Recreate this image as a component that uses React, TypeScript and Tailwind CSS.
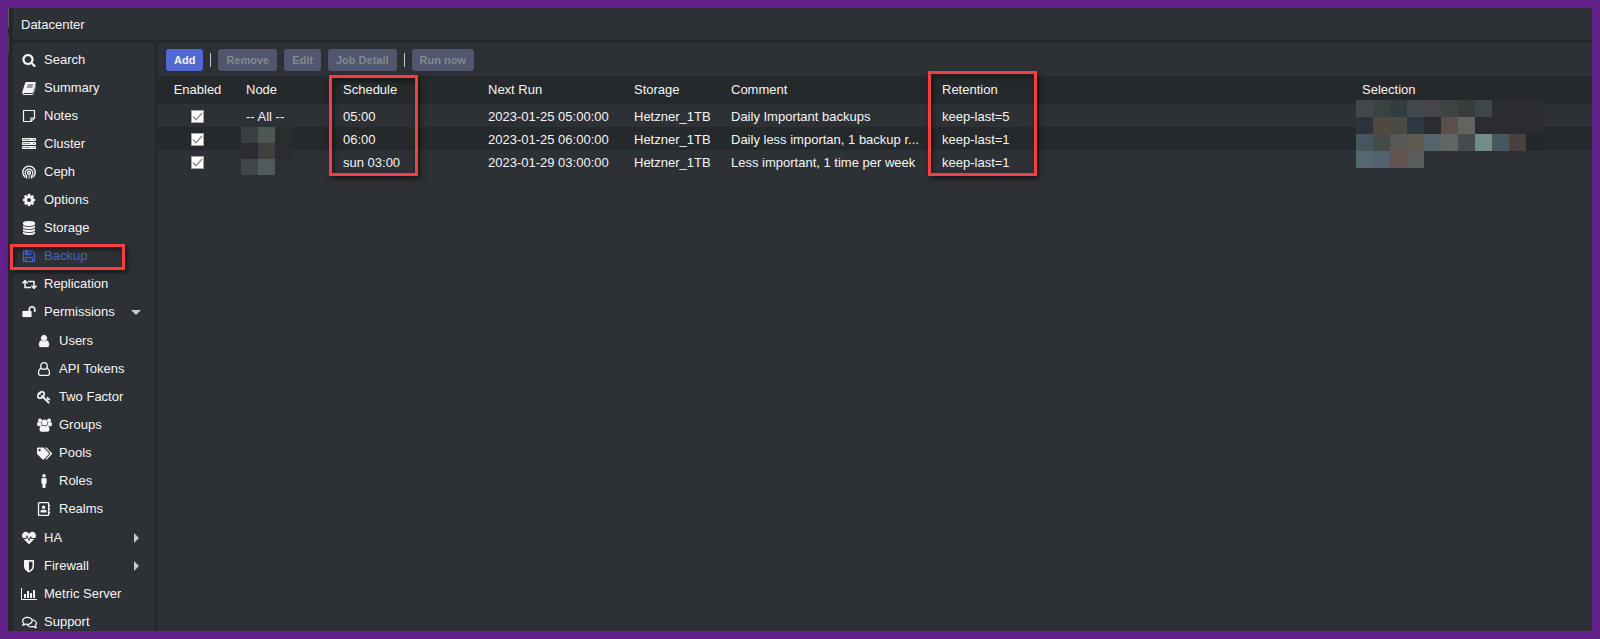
import type { ReactNode } from "react";
import clsx from "clsx";
import {
  FaHeartbeat,
  FaMale,
  FaRegAddressBook,
  FaRegComments,
  FaRetweet,
  FaTags,
} from "react-icons/fa";

type NavItem = {
  label: string;
  icon: ReactNode;
  active?: boolean;
  arrow?: "down" | "right";
  children?: NavItem[];
};

type Job = {
  node: string;
  schedule: string;
  nextRun: string;
  storage: string;
  comment: string;
  retention: string;
};

function Glyph({ d }: { d: string }) {
  return (
    <svg
      viewBox="0 0 1792 1792"
      className="size-[14px]"
      fill="currentColor"
      stroke="currentColor"
      strokeWidth="30"
    >
      <path d={d} />
    </svg>
  );
}

const paths = {
  search:
    "M1216 832q0-185-131.5-316.5t-316.5-131.5-316.5 131.5-131.5 316.5 131.5 316.5 316.5 131.5 316.5-131.5 131.5-316.5zm512 832q0 52-38 90t-90 38q-54 0-90-38l-343-342q-179 124-399 124-143 0-273.5-55.5t-225-150-150-225-55.5-273.5 55.5-273.5 150-225 225-150 273.5-55.5 273.5 55.5 225 150 150 225 55.5 273.5q0 220-124 399l343 343q37 37 37 90z",
  cog: "M1152 896q0-106-75-181t-181-75-181 75-75 181 75 181 181 75 181-75 75-181zm512-109v222q0 12-8 23t-20 13l-185 28q-19 54-39 91 35 50 107 138 10 12 10 25t-9 23q-27 37-99 108t-94 71q-12 0-26-9l-138-108q-44 23-91 38-16 136-29 186-7 28-36 28h-222q-14 0-24.5-8.5t-11.5-21.5l-28-184q-49-16-90-37l-141 107q-10 9-25 9-14 0-25-11-126-114-165-168-7-10-7-23 0-12 8-23 15-21 51-66.5t54-70.5q-27-50-41-99l-183-27q-13-2-21-12.5t-8-23.5v-222q0-12 8-23t19-13l186-28q14-46 39-92-40-57-107-138-10-12-10-24 0-10 9-23 26-36 98.5-107.5t94.5-71.5q13 0 26 10l138 107q44-23 91-38 16-136 29-186 7-28 36-28h222q14 0 24.5 8.5t11.5 21.5l28 184q49 16 90 37l142-107q9-9 24-9 13 0 25 10 129 119 165 170 7 8 7 22 0 12-8 23-15 21-51 66.5t-54 70.5q26 50 41 98l183 28q13 2 21 12.5t8 23.5z",
  database:
    "M896 768q237 0 443-43t325-127v170q0 69-103 128t-280 93.5-385 34.5-385-34.5-280-93.5-103-128v-170q119 84 325 127t443 43zm0 768q237 0 443-43t325-127v170q0 69-103 128t-280 93.5-385 34.5-385-34.5-280-93.5-103-128v-170q119 84 325 127t443 43zm0-384q237 0 443-43t325-127v170q0 69-103 128t-280 93.5-385 34.5-385-34.5-280-93.5-103-128v-170q119 84 325 127t443 43zm0-1152q208 0 385 34.5t280 93.5 103 128v128q0 69-103 128t-280 93.5-385 34.5-385-34.5-280-93.5-103-128v-128q0-69 103-128t280-93.5 385-34.5z",
  floppy:
    "M512 1536h768v-384h-768v384zm896 0h128v-896q0-14-10-38.5t-20-34.5l-281-281q-10-10-34-20t-39-10v416q0 40-28 68t-68 28h-576q-40 0-68-28t-28-68v-416h-128v1280h128v-416q0-40 28-68t68-28h832q40 0 68 28t28 68v416zm-384-928v-320q0-13-9.5-22.5t-22.5-9.5h-192q-13 0-22.5 9.5t-9.5 22.5v320q0 13 9.5 22.5t22.5 9.5h192q13 0 22.5-9.5t9.5-22.5zm640 32v928q0 40-28 68t-68 28h-1344q-40 0-68-28t-28-68v-1344q0-40 28-68t68-28h928q40 0 88 20t76 48l280 280q28 28 48 76t20 88z",
  unlock:
    "M1728 576v256q0 26-19 45t-45 19h-64q-26 0-45-19t-19-45v-256q0-106-75-181t-181-75-181 75-75 181v192h96q40 0 68 28t28 68v576q0 40-28 68t-68 28h-960q-40 0-68-28t-28-68v-576q0-40 28-68t68-28h672v-192q0-185 131.5-316.5t316.5-131.5 316.5 131.5 131.5 316.5z",
  user: "M1536 1399q0 109-62.5 187t-150.5 78h-854q-88 0-150.5-78t-62.5-187q0-85 8.5-160.5t31.5-152 58.5-131 94-89 134.5-34.5q131 128 313 128t313-128q76 0 134.5 34.5t94 89 58.5 131 31.5 152 8.5 160.5zm-256-887q0 159-112.5 271.5t-271.5 112.5-271.5-112.5-112.5-271.5 112.5-271.5 271.5-112.5 271.5 112.5 112.5 271.5z",
  key: "M832 512q0-80-56-136t-136-56-136 56-56 136q0 42 19 83-41-19-83-19-80 0-136 56t-56 136 56 136 136 56 136-56 56-136q0-42-19-83 41 19 83 19 80 0 136-56t56-136zm851 704q0 17-49 66t-66 49q-9 0-28.5-16t-36.5-33-38.5-40-24.5-26l-96 96 220 220q28 28 28 68 0 42-39 81t-81 39q-40 0-68-28l-671-671q-176 131-365 131-163 0-265.5-102.5t-102.5-265.5q0-160 95-313t248-248 313-95q163 0 265.5 102.5t102.5 265.5q0 189-131 365l355 355 96-96q-3-3-26-24.5t-40-38.5-33-36.5-16-28.5q0-17 49-66t66-49q13 0 23 10 6 6 46 44.5t82 79.5 86.5 86 73 78 28.5 41z",
};

function BookIcon() {
  return (
    <svg viewBox="0 0 14 14" className="size-[14px]">
      <path
        d="M4.500 1h8.300q1.200.2.900 1.400L11.400 10.700q-.3 1.300-1.600 1.300H2.200q-.8 0-.6.500.2.500 1 .5h7.700q.9 0 1.200-.9l2.300-7.700q.4.400.2 1l-2.200 7.200q-.4 1.300-1.700 1.300H2.300Q.3 13.900.3 12 .2 11 .5 10.300L3 2.200Q3.400 1 4.500 1z"
        fill="currentColor"
      />
      <path d="M5.500 4h5.500M5 6h5.500" stroke="#2d3035" strokeWidth="0.900" />
    </svg>
  );
}

function NoteIcon() {
  return (
    <svg viewBox="0 0 14 14" className="size-[14px]" fill="none" stroke="currentColor">
      <path d="M1.500 1.500h11v7.500l-3.500 3.500h-7.500z" strokeWidth="1.200" />
      <path d="M9 12.500v-3.500h3.500" strokeWidth="1.200" />
    </svg>
  );
}

function ServerIcon() {
  return (
    <svg viewBox="0 0 14 14" className="size-[14px]">
      {[1, 5, 9].map((y) => (
        <g key={y}>
          <rect x="0" y={y} width="14" height="3" rx="0.400" fill="currentColor" />
          <rect x="1" y={y + 1} width="7" height="1" fill="#8b8d90" />
          <rect x="11" y={y + 1} width="1.500" height="1" fill="#6b6d70" />
        </g>
      ))}
    </svg>
  );
}

function CephIcon() {
  return (
    <svg viewBox="0 0 14 14" className="size-[14px]" fill="none" stroke="currentColor" strokeWidth="1.400">
      <path d="M3.600 12.500A6.200 6.200 0 1 1 10.400 12.500" />
      <path d="M4.600 13.600v-2.600A3.900 3.900 0 1 1 9.400 11v2.600" strokeWidth="1.200" />
      <circle cx="7" cy="7.700" r="1.500" />
      <path d="M6.600 9.500v4M7.600 9.500v4" strokeWidth="0.500" />
    </svg>
  );
}

function UserOutlineIcon() {
  return (
    <svg viewBox="0 0 14 14" className="size-[14px]" fill="none" stroke="currentColor" strokeWidth="1.300">
      <circle cx="7" cy="4" r="3.300" />
      <path d="M4.300 6.300C2 6.800 1.500 9 1.500 11.200c0 1.300.8 2.100 1.900 2.100h7.200c1.100 0 1.900-.8 1.900-2.100 0-2.200-.5-4.400-2.800-4.900" />
    </svg>
  );
}

function UsersIcon() {
  return (
    <svg viewBox="0 0 15 14" className="h-[14px] w-[15px]" fill="currentColor">
      <circle cx="3" cy="2.500" r="2" />
      <circle cx="12" cy="2.500" r="2" />
      <circle cx="7.500" cy="4.500" r="2.900" />
      <path d="M0 6c0-1.300.6-2 1.400-2C2 4.400 3.200 4.600 4 4.300c0 1.300.3 2.300 1 3.100-1 0-1.700.3-2.200.8H1.500C.5 8.200 0 7.500 0 6zM15 6c0-1.300-.6-2-1.400-2-.6.4-1.800.6-2.600.3 0 1.300-.3 2.300-1 3.100 1 0 1.700.3 2.200.8h1.300c1 0 1.500-.7 1.500-2.200z" />
      <path d="M2.500 11.500C2.500 9.300 3.300 7.600 5 7.500c1.400 1.100 3.600 1.100 5 0 1.700.1 2.500 1.800 2.500 4 0 1.300-.8 2.200-2 2.200h-6c-1.200 0-2-.9-2-2.200z" />
    </svg>
  );
}

function ShieldIcon() {
  return (
    <svg viewBox="0 0 14 14" className="size-[14px]" fill="currentColor">
      <path
        fillRule="evenodd"
        d="M2 1.500q0-.5.5-.5h9q.5 0 .5.500v6q0 3.500-5 6-5-2.500-5-6zM7 2.700v9q3.500-2 3.500-4.200v-4.800z"
      />
    </svg>
  );
}

function ChartIcon() {
  return (
    <svg viewBox="0 0 16 14" className="h-[14px] w-[16px]" fill="currentColor">
      <path d="M0 1h1v11h15v1H0zM3 7h2v4H3zM6 4h2v7H6zM9 6h2v5H9zM12 3h2v8h-2z" />
    </svg>
  );
}

const navItems: NavItem[] = [
  { label: "Search", icon: <Glyph d={paths.search} /> },
  { label: "Summary", icon: <BookIcon /> },
  { label: "Notes", icon: <NoteIcon /> },
  { label: "Cluster", icon: <ServerIcon /> },
  { label: "Ceph", icon: <CephIcon /> },
  { label: "Options", icon: <Glyph d={paths.cog} /> },
  { label: "Storage", icon: <Glyph d={paths.database} /> },
  { label: "Backup", icon: <Glyph d={paths.floppy} />, active: true },
  { label: "Replication", icon: <FaRetweet size={15} /> },
  {
    label: "Permissions",
    icon: <Glyph d={paths.unlock} />,
    arrow: "down",
    children: [
      { label: "Users", icon: <Glyph d={paths.user} /> },
      { label: "API Tokens", icon: <UserOutlineIcon /> },
      { label: "Two Factor", icon: <Glyph d={paths.key} /> },
      { label: "Groups", icon: <UsersIcon /> },
      { label: "Pools", icon: <FaTags size={15} /> },
      { label: "Roles", icon: <FaMale size={14} /> },
      { label: "Realms", icon: <FaRegAddressBook size={14} /> },
    ],
  },
  { label: "HA", icon: <FaHeartbeat size={14} />, arrow: "right" },
  { label: "Firewall", icon: <ShieldIcon />, arrow: "right" },
  { label: "Metric Server", icon: <ChartIcon /> },
  { label: "Support", icon: <FaRegComments size={15} /> },
];

const jobs: Job[] = [
  {
    node: "-- All --",
    schedule: "05:00",
    nextRun: "2023-01-25 05:00:00",
    storage: "Hetzner_1TB",
    comment: "Daily Important backups",
    retention: "keep-last=5",
  },
  {
    node: "",
    schedule: "06:00",
    nextRun: "2023-01-25 06:00:00",
    storage: "Hetzner_1TB",
    comment: "Daily less importan, 1 backup r...",
    retention: "keep-last=1",
  },
  {
    node: "",
    schedule: "sun 03:00",
    nextRun: "2023-01-29 03:00:00",
    storage: "Hetzner_1TB",
    comment: "Less important, 1 time per week",
    retention: "keep-last=1",
  },
];

// Pixelated cover for the node names
const nodeTiles = [
  ["bg-[#3a3f41]", "bg-[#4d5854]", "bg-[#292d30]"],
  ["bg-[#2a2c31]", "bg-[#413f3d]", "bg-[#2a2c31]"],
  ["bg-[#414749]", "bg-[#4f5a5b]", "bg-[#2d3035]"],
];

// Pixelated cover for the selected guests
const selectionTiles = [
  ["bg-[#43474a]", "bg-[#3a433f]", "bg-[#333d40]", "bg-[#43484c]", "bg-[#474549]", "bg-[#3e4441]", "bg-[#383c3c]", "bg-[#3d4649]", "bg-[#2a2c31]", "bg-[#2a2c31]", "bg-[#2a2c31]"],
  ["bg-[#2d333c]", "bg-[#50493f]", "bg-[#4a4b45]", "bg-[#2c3942]", "bg-[#2a2c31]", "bg-[#5b4f4a]", "bg-[#63645f]", "bg-[#2a2c31]", "bg-[#2a2c31]", "bg-[#2a2c31]", "bg-[#2a2c31]"],
  ["bg-[#46565e]", "bg-[#444b48]", "bg-[#575756]", "bg-[#5e594c]", "bg-[#55656e]", "bg-[#606566]", "bg-[#484b4e]", "bg-[#728d87]", "bg-[#475861]", "bg-[#48413d]", "bg-[#25282a]"],
  ["bg-[#566871]", "bg-[#526271]", "bg-[#62534e]", "bg-[#595d5e]"],
];

function Tiles({ rows, tile }: { rows: string[][]; tile: string }) {
  return (
    <div className="flex flex-col">
      {rows.map((row, i) => (
        <div key={i} className="flex">
          {row.map((color, j) => (
            <span key={j} className={clsx("w-[17px]", tile, color)} />
          ))}
        </div>
      ))}
    </div>
  );
}

function Highlight({ className }: { className: string }) {
  return (
    <span
      className={clsx(
        "pointer-events-none absolute z-10 border-3 border-[#f43f42] shadow-[2px_3px_5px_rgba(0,0,0,0.5),inset_2px_3px_5px_rgba(0,0,0,0.45)]",
        className
      )}
    />
  );
}

function NavLink({ item, nested }: { item: NavItem; nested?: boolean }) {
  return (
    <li>
      <a
        href="#"
        className={clsx(
          "relative flex h-7 items-center gap-2 pr-[11px]",
          nested ? "pl-6" : "pl-[9px]",
          item.active ? "text-[#4a63c8]" : "text-[#f5f5f5]"
        )}
      >
        <span className="flex w-[14px] shrink-0 items-center justify-center">
          <span className="shrink-0">{item.icon}</span>
        </span>
        <span className="flex-1 whitespace-nowrap">{item.label}</span>
        {item.arrow && (
          <span className="flex w-4 justify-center text-[#c8c9ca]">
            {item.arrow === "down" ? (
              <svg viewBox="0 0 10 5" className="h-[5px] w-[10px]" fill="currentColor">
                <path d="M0 0h10l-5 5z" />
              </svg>
            ) : (
              <svg viewBox="0 0 5 10" className="h-[10px] w-[5px]" fill="currentColor">
                <path d="M0 0l5 5-5 5z" />
              </svg>
            )}
          </span>
        )}
        {item.active && <Highlight className="-left-[3px] top-[2px] h-[26px] w-[115px]" />}
      </a>
      {item.children && (
        <ul className="py-px">
          {item.children.map((child) => (
            <NavLink key={child.label} item={child} nested />
          ))}
        </ul>
      )}
    </li>
  );
}

function ToolbarButton({ label, primary }: { label: string; primary?: boolean }) {
  return (
    <button
      type="button"
      disabled={!primary}
      className={clsx(
        "h-[22px] rounded-[3px] px-2 text-[11px] font-bold whitespace-nowrap",
        primary ? "bg-[#4f69d0] text-[#f2f2f2]" : "bg-[#4f566d] text-[#85888f]"
      )}
    >
      {label}
    </button>
  );
}

function Separator() {
  return <span className="h-[14px] w-px bg-[#c8c9ca]" />;
}

function EnabledBox({ label }: { label: string }) {
  return (
    <span className="relative mx-auto block size-[13px]">
      <input
        type="checkbox"
        defaultChecked
        disabled
        aria-label={label}
        className="block size-[13px] appearance-none border border-[#a5a5a5] bg-white"
      />
      <svg
        viewBox="0 0 13 13"
        className="pointer-events-none absolute inset-0"
        fill="none"
        stroke="#8c8c8c"
        strokeWidth="1.400"
      >
        <path d="M2 6.500l3 3.200 6-6.700" />
      </svg>
    </span>
  );
}

export default function App() {
  return (
    <div className="flex h-screen border-8 border-[#65218a] bg-[#25292b] font-['Liberation_Sans',Arial,sans-serif] text-[13px] leading-4 text-[#f5f5f5]">
      {/* Window edge */}
      <div className="flex w-[5px] shrink-0 flex-col gap-[6px]">
        <span className="h-5 w-px bg-[#5a5d60]" />
        <span className="h-5 w-px bg-[#44484a]" />
      </div>

      <div className="flex min-w-0 flex-1 flex-col gap-[3px]">
        <header className="flex h-8 shrink-0 items-center bg-[#2d3035] pt-[2px] pl-2">
          <h1>Datacenter</h1>
        </header>

        <div className="flex min-h-0 flex-1 gap-[3px]">
          {/* Sidebar */}
          <nav className="w-[142px] shrink-0 overflow-y-clip bg-[#2d3035] pt-[3px]">
            <ul>
              {navItems.map((item) => (
                <NavLink key={item.label} item={item} />
              ))}
            </ul>
          </nav>

          {/* Backup jobs */}
          <main className="min-w-0 flex-1 bg-[#2d3035]">
            <div className="flex h-[33px] items-center gap-[7px] px-2">
              <ToolbarButton label="Add" primary />
              <Separator />
              <ToolbarButton label="Remove" />
              <ToolbarButton label="Edit" />
              <ToolbarButton label="Job Detail" />
              <Separator />
              <ToolbarButton label="Run now" />
            </div>

            <table className="w-full table-fixed border-collapse text-left">
              <thead>
                <tr className="h-7 bg-[#25292b] [&>th]:px-[9px] [&>th]:font-normal">
                  <th className="w-[79px] text-center">Enabled</th>
                  <th className="w-[97px]">Node</th>
                  <th className="relative w-[145px]">
                    Schedule
                    <Highlight className="-left-[5px] -top-px h-[101px] w-[89px]" />
                  </th>
                  <th className="w-[146px]">Next Run</th>
                  <th className="w-[97px]">Storage</th>
                  <th className="w-[211px]">Comment</th>
                  <th className="relative w-[420px]">
                    Retention
                    <Highlight className="-left-[5px] -top-[5px] h-[105px] w-[109px]" />
                  </th>
                  <th>Selection</th>
                </tr>
              </thead>
              <tbody>
                {jobs.map((job, i) => (
                  <tr
                    key={job.schedule}
                    className="h-[23px] even:bg-[#25292b] [&>td]:px-[9px] [&>td]:pt-[2px] [&>td]:whitespace-nowrap"
                  >
                    <td>
                      <EnabledBox label={`Enabled, ${job.schedule}`} />
                    </td>
                    <td className="relative">
                      {job.node}
                      {i === 1 && (
                        <div className="absolute left-1 top-0 z-10">
                          <Tiles rows={nodeTiles} tile="h-4" />
                        </div>
                      )}
                    </td>
                    <td>{job.schedule}</td>
                    <td>{job.nextRun}</td>
                    <td>{job.storage}</td>
                    <td>{job.comment}</td>
                    <td>{job.retention}</td>
                    <td className="relative">
                      {i === 0 && (
                        <div className="absolute -top-1 left-[3px] z-10">
                          <Tiles rows={selectionTiles} tile="h-[17px]" />
                        </div>
                      )}
                    </td>
                  </tr>
                ))}
              </tbody>
            </table>
          </main>
        </div>
      </div>
    </div>
  );
}
